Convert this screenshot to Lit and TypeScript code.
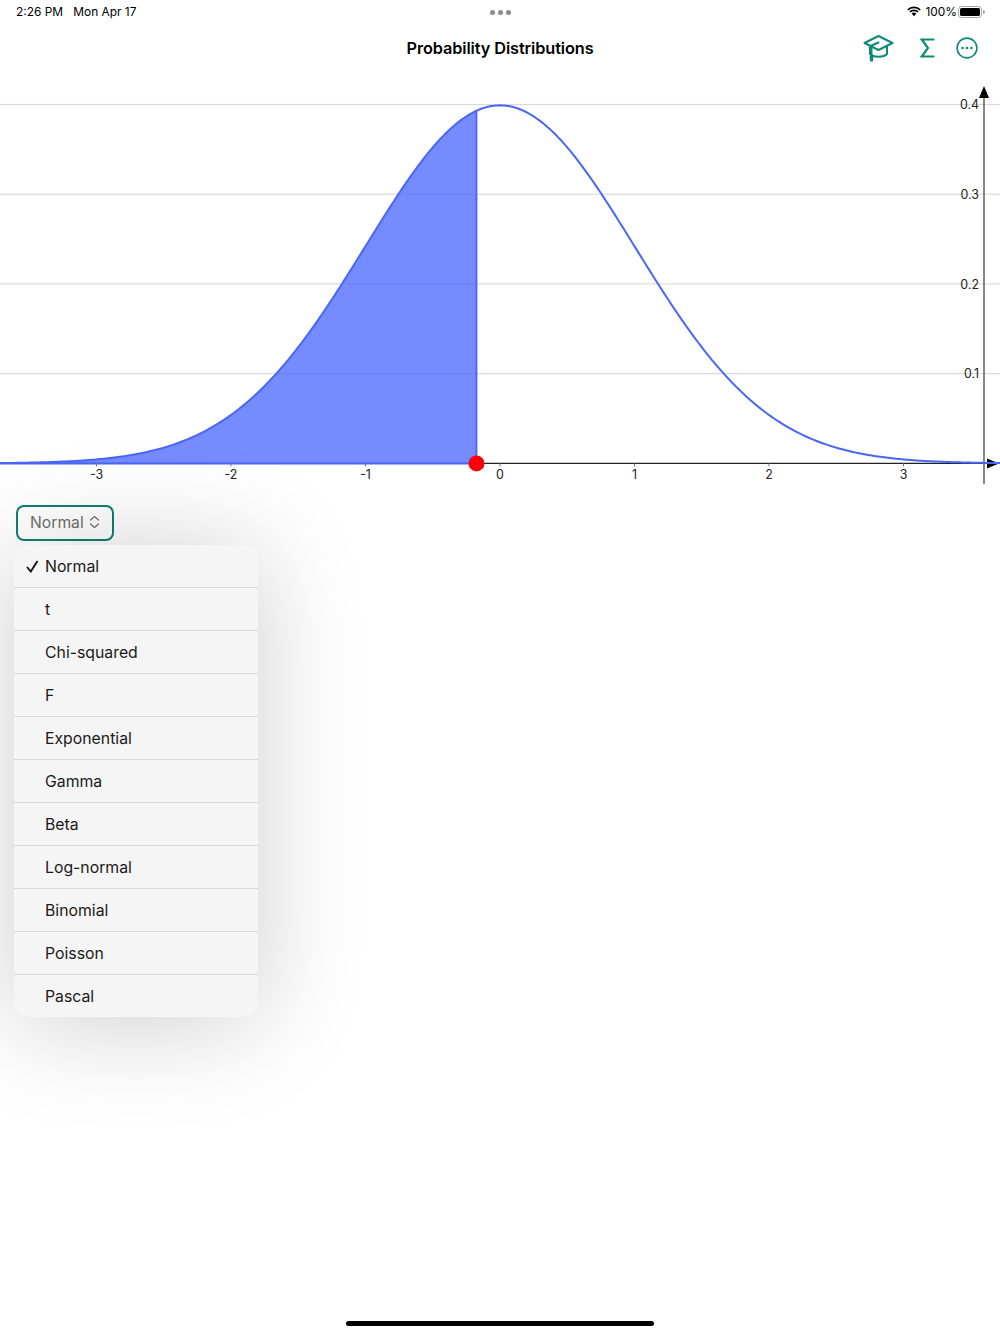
import { LitElement, html, svg, css } from "lit";
import { customElement, state } from "lit/decorators.js";

const DISTRIBUTIONS = ["Normal", "t", "Chi-squared", "F", "Exponential", "Gamma", "Beta", "Log-normal", "Binomial", "Poisson", "Pascal"];

// chart scale, in px of the 1000 wide svg which starts at y=80
const X0 = 500;
const X_UNIT = 134.5;
const Y0 = 383.4;
const Y_UNIT = 897.5;
const MARKER_X = 476.5;

const pdf = (v: number) => Math.exp((-v * v) / 2) / Math.sqrt(2 * Math.PI);

function curvePoints(from: number, to: number) {
	const pts: string[] = [];
	for (let x = from; x <= to; x += 2) {
		pts.push(`${x},${(Y0 - pdf((x - X0) / X_UNIT) * Y_UNIT).toFixed(2)}`);
	}
	return pts;
}

@customElement("app-root")
export class AppRoot extends LitElement {
	@state()
	selected = "Normal";

	static styles = css`
	:host {
		display: flex;
		flex-direction: column;
		position: relative;
		height: 1334px;
		overflow: hidden;
		background: #fff;
		color: #000;
		font-family: Inter, "Liberation Sans", sans-serif;
	}

	.status {
		box-sizing: border-box;
		height: 24px;
		display: flex;
		align-items: center;
		justify-content: space-between;
		padding: 0 15px 1px 16px;
		font-size: 11.9px;
		flex: none;
	}
	.status .time span { margin-left: 7px; }
	.status .dots { display: flex; gap: 3px; position: absolute; left: 490px; top: 10px; }
	.status .dots i { width: 5px; height: 5px; border-radius: 50%; background: #8a8a8a; }
	.status .right { display: flex; align-items: center; gap: 1px; }
	.status .right svg:first-child { margin-right: 3px; }

	.nav {
		height: 48px;
		display: flex;
		align-items: center;
		justify-content: center;
		position: relative;
		flex: none;
	}
	.nav h1 {
		margin: 0;
		font-size: 16.3px;
		font-weight: 600;
		letter-spacing: -0.1px;
	}
	.nav .actions {
		position: absolute;
		right: 22px;
		top: 10px;
		display: flex;
		align-items: center;
		gap: 21px;
		color: #0d8a78;
	}
	.nav svg { display: block; }
	.nav svg.cap { margin-right: 5px; }

	.chart { display: block; flex: none; margin-top: 8px; }
	.chart text { font-family: Inter, "Liberation Sans", sans-serif; font-size: 12.4px; fill: #222; }

	.controls { padding: 15px 16px 0; flex: none; position: relative; }
	.picker {
		box-sizing: border-box;
		width: 98px;
		height: 36px;
		display: flex;
		align-items: center;
		gap: 5px;
		padding: 0 0 2px 12px;
		border: 2px solid #0f8070;
		border-radius: 8px;
		font-size: 15.7px;
		color: #6f6f6f;
	}

	.menu {
		position: absolute;
		left: 14px;
		top: 55px;
		width: 244px;
		border-radius: 14px;
		background: #f5f5f5;
		box-shadow: 0 5px 110px rgba(0, 0, 0, 0.2);
	}
	.menu .row {
		box-sizing: border-box;
		height: 43px;
		display: flex;
		align-items: center;
		padding-left: 31px;
		position: relative;
		font-size: 15.8px;
		color: #1a1a1a;
		border-bottom: 1px solid #d5d5d5;
	}
	.menu .row:last-child { border-bottom: none; height: 42px; }
	.menu .row svg { position: absolute; left: 12px; top: 15px; }

	.home {
		position: absolute;
		left: 346px;
		top: 1321px;
		width: 308px;
		height: 5px;
		border-radius: 3px;
		background: #000;
	}
	`;

	renderChart() {
		const curve = curvePoints(0, 1000);
		const filled = curvePoints(0, MARKER_X);
		const markerY = (Y0 - pdf((MARKER_X - X0) / X_UNIT) * Y_UNIT).toFixed(2);
		const area = `0,${Y0} ${filled.join(" ")} ${MARKER_X},${markerY} ${MARKER_X},${Y0}`;

		return html`<svg class="chart" width="1000" height="410" viewBox="0 0 1000 410">
			${[0.1, 0.2, 0.3, 0.4].map((v) => {
				const y = Y0 - v * Y_UNIT;
				return svg`
					<line x1="0" x2="1000" y1=${y} y2=${y} stroke="#d4d4d4" stroke-width="1"></line>
					<text x="979" y=${y + 4.8} text-anchor="end">${v.toFixed(1)}</text>`;
			})}
			<line x1="0" x2="990" y1=${Y0} y2=${Y0} stroke="#222" stroke-width="1.3"></line>
			<polygon points=${area} fill="#4a66ff" fill-opacity="0.76"></polygon>
			<line x1="0" x2=${MARKER_X} y1=${Y0} y2=${Y0} stroke="#4a66f7" stroke-width="2"></line>
			${[-3, -2, -1, 0, 1, 2, 3].map((v) => {
				const x = X0 + v * X_UNIT;
				return svg`
					<line x1=${x} x2=${x} y1=${Y0} y2=${Y0 + 3} stroke="#777" stroke-width="1"></line>
					<text x=${x} y=${Y0 + 15.6} text-anchor="middle">${v}</text>`;
			})}
			<line x1="984" x2="984" y1="12" y2="404" stroke="#555" stroke-width="1.4"></line>
			<polygon points="984,6 979,18 989,18" fill="#000"></polygon>
			<polygon points="987,378.4 999,383.4 987,388.4" fill="#000"></polygon>
			<line x1=${MARKER_X} x2=${MARKER_X} y1=${markerY} y2=${Y0} stroke="#4a66f7" stroke-width="1.8"></line>
			<polyline points=${curve.join(" ")} fill="none" stroke="#4a66f7" stroke-width="2"></polyline>
			<circle cx=${MARKER_X} cy=${Y0} r="8" fill="#fb0007"></circle>
		</svg>`;
	}

	render() {
		return html`
		<div class="status">
			<div class="time">2:26 PM <span>Mon Apr 17</span></div>
			<div class="dots"><i></i><i></i><i></i></div>
			<div class="right">
				<svg width="14" height="11" viewBox="0 0 14 11">
					<path d="M0.8 3.8 A9 9 0 0 1 13.2 3.8 M2.9 5.9 A6 6 0 0 1 11.1 5.9" fill="none" stroke="#000" stroke-width="1.7"></path>
					<path d="M4.6 7.6 A3.4 3.4 0 0 1 9.4 7.6 L7 10.2 Z" fill="#000"></path>
				</svg>
				<span>100%</span>
				<svg width="27" height="12" viewBox="0 0 27 12">
					<rect x="0.5" y="0.5" width="23" height="11" rx="3" fill="none" stroke="#a5a5a5"></rect>
					<rect x="2" y="2" width="20" height="8" rx="1.6" fill="#000"></rect>
					<path d="M25 4 A2 2 0 0 1 25 8 Z" fill="#a5a5a5"></path>
				</svg>
			</div>
		</div>
		<div class="nav">
			<h1>Probability Distributions</h1>
			<div class="actions">
				<svg class="cap" width="31" height="28" viewBox="0 0 31 28" fill="none" stroke="currentColor" stroke-width="2" stroke-linejoin="round" stroke-linecap="round">
					<path d="M15.5 2 L29.5 9 L15.5 16 L1.5 9 Z"></path>
					<path d="M7 12.5 V20 C10 23.5 21 23.5 24 20 V12.5"></path>
					<path d="M15.5 8.5 L8.5 11.5 V25"></path>
					<path d="M8.5 22 V26" stroke-width="3.4"></path>
				</svg>
				<svg width="15" height="20" viewBox="0 0 15 20" fill="none" stroke="currentColor" stroke-width="2.2" stroke-linecap="round" stroke-linejoin="miter">
					<path d="M13.5 1.5 H1.8 L8 10 L1.8 18.5 H13.5"></path>
				</svg>
				<svg width="22" height="22" viewBox="0 0 22 22">
					<circle cx="11" cy="11" r="9.9" fill="none" stroke="currentColor" stroke-width="1.6"></circle>
					<circle cx="6.6" cy="11" r="1.3" fill="currentColor"></circle>
					<circle cx="11" cy="11" r="1.3" fill="currentColor"></circle>
					<circle cx="15.4" cy="11" r="1.3" fill="currentColor"></circle>
				</svg>
			</div>
		</div>
		${this.renderChart()}
		<div class="controls">
			<div class="picker">
				<span>${this.selected}</span>
				<svg width="11" height="14" viewBox="0 0 11 14" fill="none" stroke="currentColor" stroke-width="1.2" stroke-linecap="round" stroke-linejoin="round">
					<path d="M1.5 5 L5.5 1.5 L9.5 5 M1.5 9 L5.5 12.5 L9.5 9"></path>
				</svg>
			</div>
			<div class="menu">
				${DISTRIBUTIONS.map((name) => html`
					<div class="row">
						${name === this.selected ? html`<svg width="13" height="13" viewBox="0 0 13 13" fill="none" stroke="#111" stroke-width="1.9"><path d="M1 7 L4.8 11.5 L11.5 1"></path></svg>` : ""}
						${name}
					</div>`)}
			</div>
		</div>
		<div class="home"></div>
		`;
	}
}

declare global {
	interface HTMLElementTagNameMap {
		"app-root": AppRoot;
	}
}
